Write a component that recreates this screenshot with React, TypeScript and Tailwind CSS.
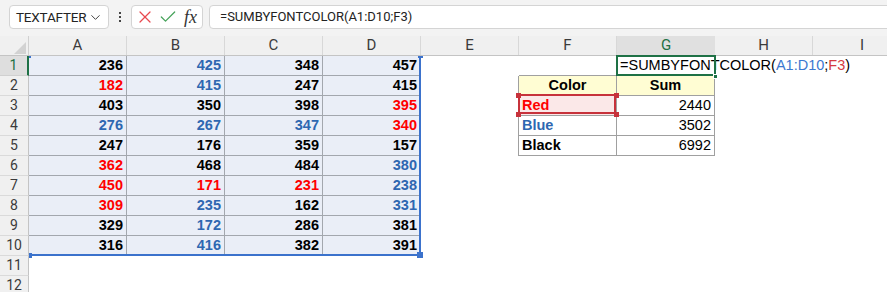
import { ChevronDown, X, Check } from "lucide-react";

type Tone = "k" | "b" | "r";

const toneClass: Record<Tone, string> = {
  k: "text-black",
  b: "text-[#2e67b1]",
  r: "text-[#ff0000]",
};

const data: [number, Tone][][] = [
  [[236, "k"], [425, "b"], [348, "k"], [457, "k"]],
  [[182, "r"], [415, "b"], [247, "k"], [415, "k"]],
  [[403, "k"], [350, "k"], [398, "k"], [395, "r"]],
  [[276, "b"], [267, "b"], [347, "b"], [340, "r"]],
  [[247, "k"], [176, "k"], [359, "k"], [157, "k"]],
  [[362, "r"], [468, "k"], [484, "k"], [380, "b"]],
  [[450, "r"], [171, "r"], [231, "r"], [238, "b"]],
  [[309, "r"], [235, "b"], [162, "k"], [331, "b"]],
  [[329, "k"], [172, "b"], [286, "k"], [381, "k"]],
  [[316, "k"], [416, "b"], [382, "k"], [391, "k"]],
];

const summary: { label: string; tone: Tone; sum: number }[] = [
  { label: "Red", tone: "r", sum: 2440 },
  { label: "Blue", tone: "b", sum: 3502 },
  { label: "Black", tone: "k", sum: 6992 },
];

const cols = ["A", "B", "C", "D", "E", "F", "G", "H"];

const cellFont = "font-['Liberation_Sans',Arial,sans-serif] text-[14.5px]";

function Cell({ row, col }: { row: number; col: number }) {
  // data block A1:D10
  if (row >= 1 && row <= 10 && col <= 3) {
    const [v, t] = data[row - 1][col];
    return (
      <div
        className={`w-[98px] shrink-0 h-full flex items-center justify-end pr-[3px] pt-px bg-[#eaeef7] border-r border-b border-[#a3a7ae] font-bold ${toneClass[t]} ${cellFont}`}
      >
        {v}
      </div>
    );
  }
  // E column, left edge of summary table
  if (col === 4) {
    const edge = row >= 2 && row <= 5;
    return <div className={`w-[98px] shrink-0 h-full ${edge ? "border-r border-[#a0a0a0]" : ""}`} />;
  }
  if (col === 5 || col === 6) {
    if (row === 1) {
      if (col === 6) {
        return (
          <div className={`w-[98px] shrink-0 h-full border-b border-[#a0a0a0] relative z-10 flex items-center pl-[3px] pt-px whitespace-nowrap ${cellFont} text-black`}>
            <span>
              =SUMBYFONTCOLOR(<span className="text-[#3c78d0]">A1:D10</span>;
              <span className="text-[#d63a41]">F3</span>)
            </span>
          </div>
        );
      }
      return <div className="w-[98px] shrink-0 h-full border-b border-[#a0a0a0]" />;
    }
    if (row === 2) {
      return (
        <div className={`w-[98px] shrink-0 h-full flex items-center justify-center pt-px bg-[#fffdd3] border-r border-b border-[#a0a0a0] font-bold text-black ${cellFont}`}>
          {col === 5 ? "Color" : "Sum"}
        </div>
      );
    }
    if (row >= 3 && row <= 5) {
      const s = summary[row - 3];
      if (col === 5) {
        return (
          <div
            className={`w-[98px] shrink-0 h-full flex items-center pl-[3px] pt-px border-r border-b border-[#a0a0a0] font-bold ${toneClass[s.tone]} ${cellFont} ${row === 3 ? "bg-[#fbe8e8]" : ""}`}
          >
            {s.label}
          </div>
        );
      }
      return (
        <div className={`w-[98px] shrink-0 h-full flex items-center justify-end pr-[3px] pt-px border-r border-b border-[#a0a0a0] text-black ${cellFont}`}>
          {s.sum}
        </div>
      );
    }
  }
  return <div className="w-[98px] shrink-0 h-full" />;
}

export default function App() {
  const rows = Array.from({ length: 12 }, (_, i) => i + 1);

  return (
    <div className="relative w-[887px] h-[292px] overflow-hidden bg-white select-none">
      {/* formula bar */}
      <div className="h-[36px] bg-[#f3f3f3] flex items-start pt-[5px] pl-[9px] font-['Roboto',sans-serif]">
        <div className="w-[100px] h-[24px] bg-white border border-[#d4d4d4] rounded-[4px] flex items-center justify-between pl-[6px] pr-[5px] text-[13.5px] tracking-[-0.2px] text-[#242424]">
          <span>TEXTAFTER</span>
          <ChevronDown size={15} strokeWidth={1.6} className="text-[#444]" />
        </div>
        <div className="w-[22px] h-[24px] flex flex-col items-center justify-center gap-[2px]">
          <span className="w-[2px] h-[2px] bg-[#444]" />
          <span className="w-[2px] h-[2px] bg-[#444]" />
          <span className="w-[2px] h-[2px] bg-[#444]" />
        </div>
        <div className="w-[72px] h-[24px] bg-white border border-[#d4d4d4] rounded-[4px] flex items-center pl-[3px] gap-[3px]">
          <X size={20} strokeWidth={1.5} className="text-[#e8494f]" />
          <Check size={20} strokeWidth={1.5} className="text-[#46a35a]" />
          <span className="font-['Liberation_Serif',serif] italic text-[18px] text-[#333] leading-none ml-[3px]">fx</span>
        </div>
        <div className="flex-1 -mr-[6px] ml-[6px] h-[24px] bg-white border border-[#d4d4d4] rounded-[4px] flex items-center pl-[10px] text-[13px] text-[#222]">
          =SUMBYFONTCOLOR(A1:D10;F3)
        </div>
      </div>

      {/* column headers */}
      <div className="h-[20px] flex bg-[#f0f0f0] border-b border-[#c4c4c4] font-['Roboto',sans-serif] text-[15px] text-[#3b3b3b]">
        <div className="w-[29px] shrink-0 h-full border-r border-[#d0d0d0] flex items-end justify-end pr-[2px] pb-[1px]">
          <div className="w-0 h-0 border-l-[12px] border-l-transparent border-b-[12px] border-b-[#d2d2d2]" />
        </div>
        {cols.map((c) =>
          c === "G" ? (
            <div key={c} className="w-[98px] shrink-0 h-[21px] bg-[#e0e0e0] border-b-2 border-[#1e7145] flex items-center justify-center text-[#1e7145] relative z-10">
              {c}
            </div>
          ) : (
            <div key={c} className="w-[98px] shrink-0 h-full border-r border-[#d8d8d8] flex items-center justify-center">
              {c}
            </div>
          )
        )}
        <div className="w-[98px] shrink-0 h-full flex items-center justify-center">I</div>
      </div>

      {/* rows */}
      {rows.map((r) => (
        <div key={r} className="h-[20px] flex">
          <div
            className={`w-[29px] shrink-0 h-full flex items-center justify-center font-['Roboto',sans-serif] text-[14px] ${
              r === 1
                ? "bg-[#dedede] text-[#1e7145] border-r-2 border-[#1e7145] border-b border-b-[#d0d0d0]"
                : "bg-[#f0f0f0] text-[#3b3b3b] border-r border-[#c4c4c4] border-b border-b-[#dadada]"
            }`}
          >
            {r}
          </div>
          {cols.map((_, ci) => (
            <Cell key={ci} row={r} col={ci} />
          ))}
          <div className="flex-1" />
        </div>
      ))}

      {/* A1:D10 reference highlight */}
      <div className="absolute left-[419px] top-[56px] w-[2px] h-[200px] bg-[#3b72cc]" />
      <div className="absolute left-[29px] top-[254px] w-[392px] h-[2px] bg-[#3b72cc]" />
      <div className="absolute left-[418px] top-[56px] w-[5px] h-[2px] bg-[#3b72cc]" />
      <div className="absolute left-[29px] top-[56px] w-[2px] h-[2px] bg-[#3b72cc]" />
      <div className="absolute left-[29px] top-[253px] w-[3px] h-[5px] bg-[#3b72cc]" />
      <div className="absolute left-[417px] top-[252px] w-[6px] h-[6px] bg-[#3b72cc]" />

      {/* F3 reference highlight */}
      <div className="absolute left-[518px] top-[94px] w-[98px] h-[20px] border-2 border-[#c7323b]" />
      <div className="absolute left-[516px] top-[93px] w-[5px] h-[5px] bg-[#c7323b]" />
      <div className="absolute left-[614px] top-[93px] w-[5px] h-[5px] bg-[#c7323b]" />
      <div className="absolute left-[516px] top-[112px] w-[5px] h-[5px] bg-[#c7323b]" />
      <div className="absolute left-[614px] top-[112px] w-[5px] h-[5px] bg-[#c7323b]" />

      {/* active cell G1 */}
      <div className="absolute left-[616px] top-[55px] w-[100px] h-[21px] border-2 border-[#1e7145] z-20" />
      <div className="absolute left-[713px] top-[74px] w-[5px] h-[5px] bg-[#1e7145] border border-white z-20" />
    </div>
  );
}
